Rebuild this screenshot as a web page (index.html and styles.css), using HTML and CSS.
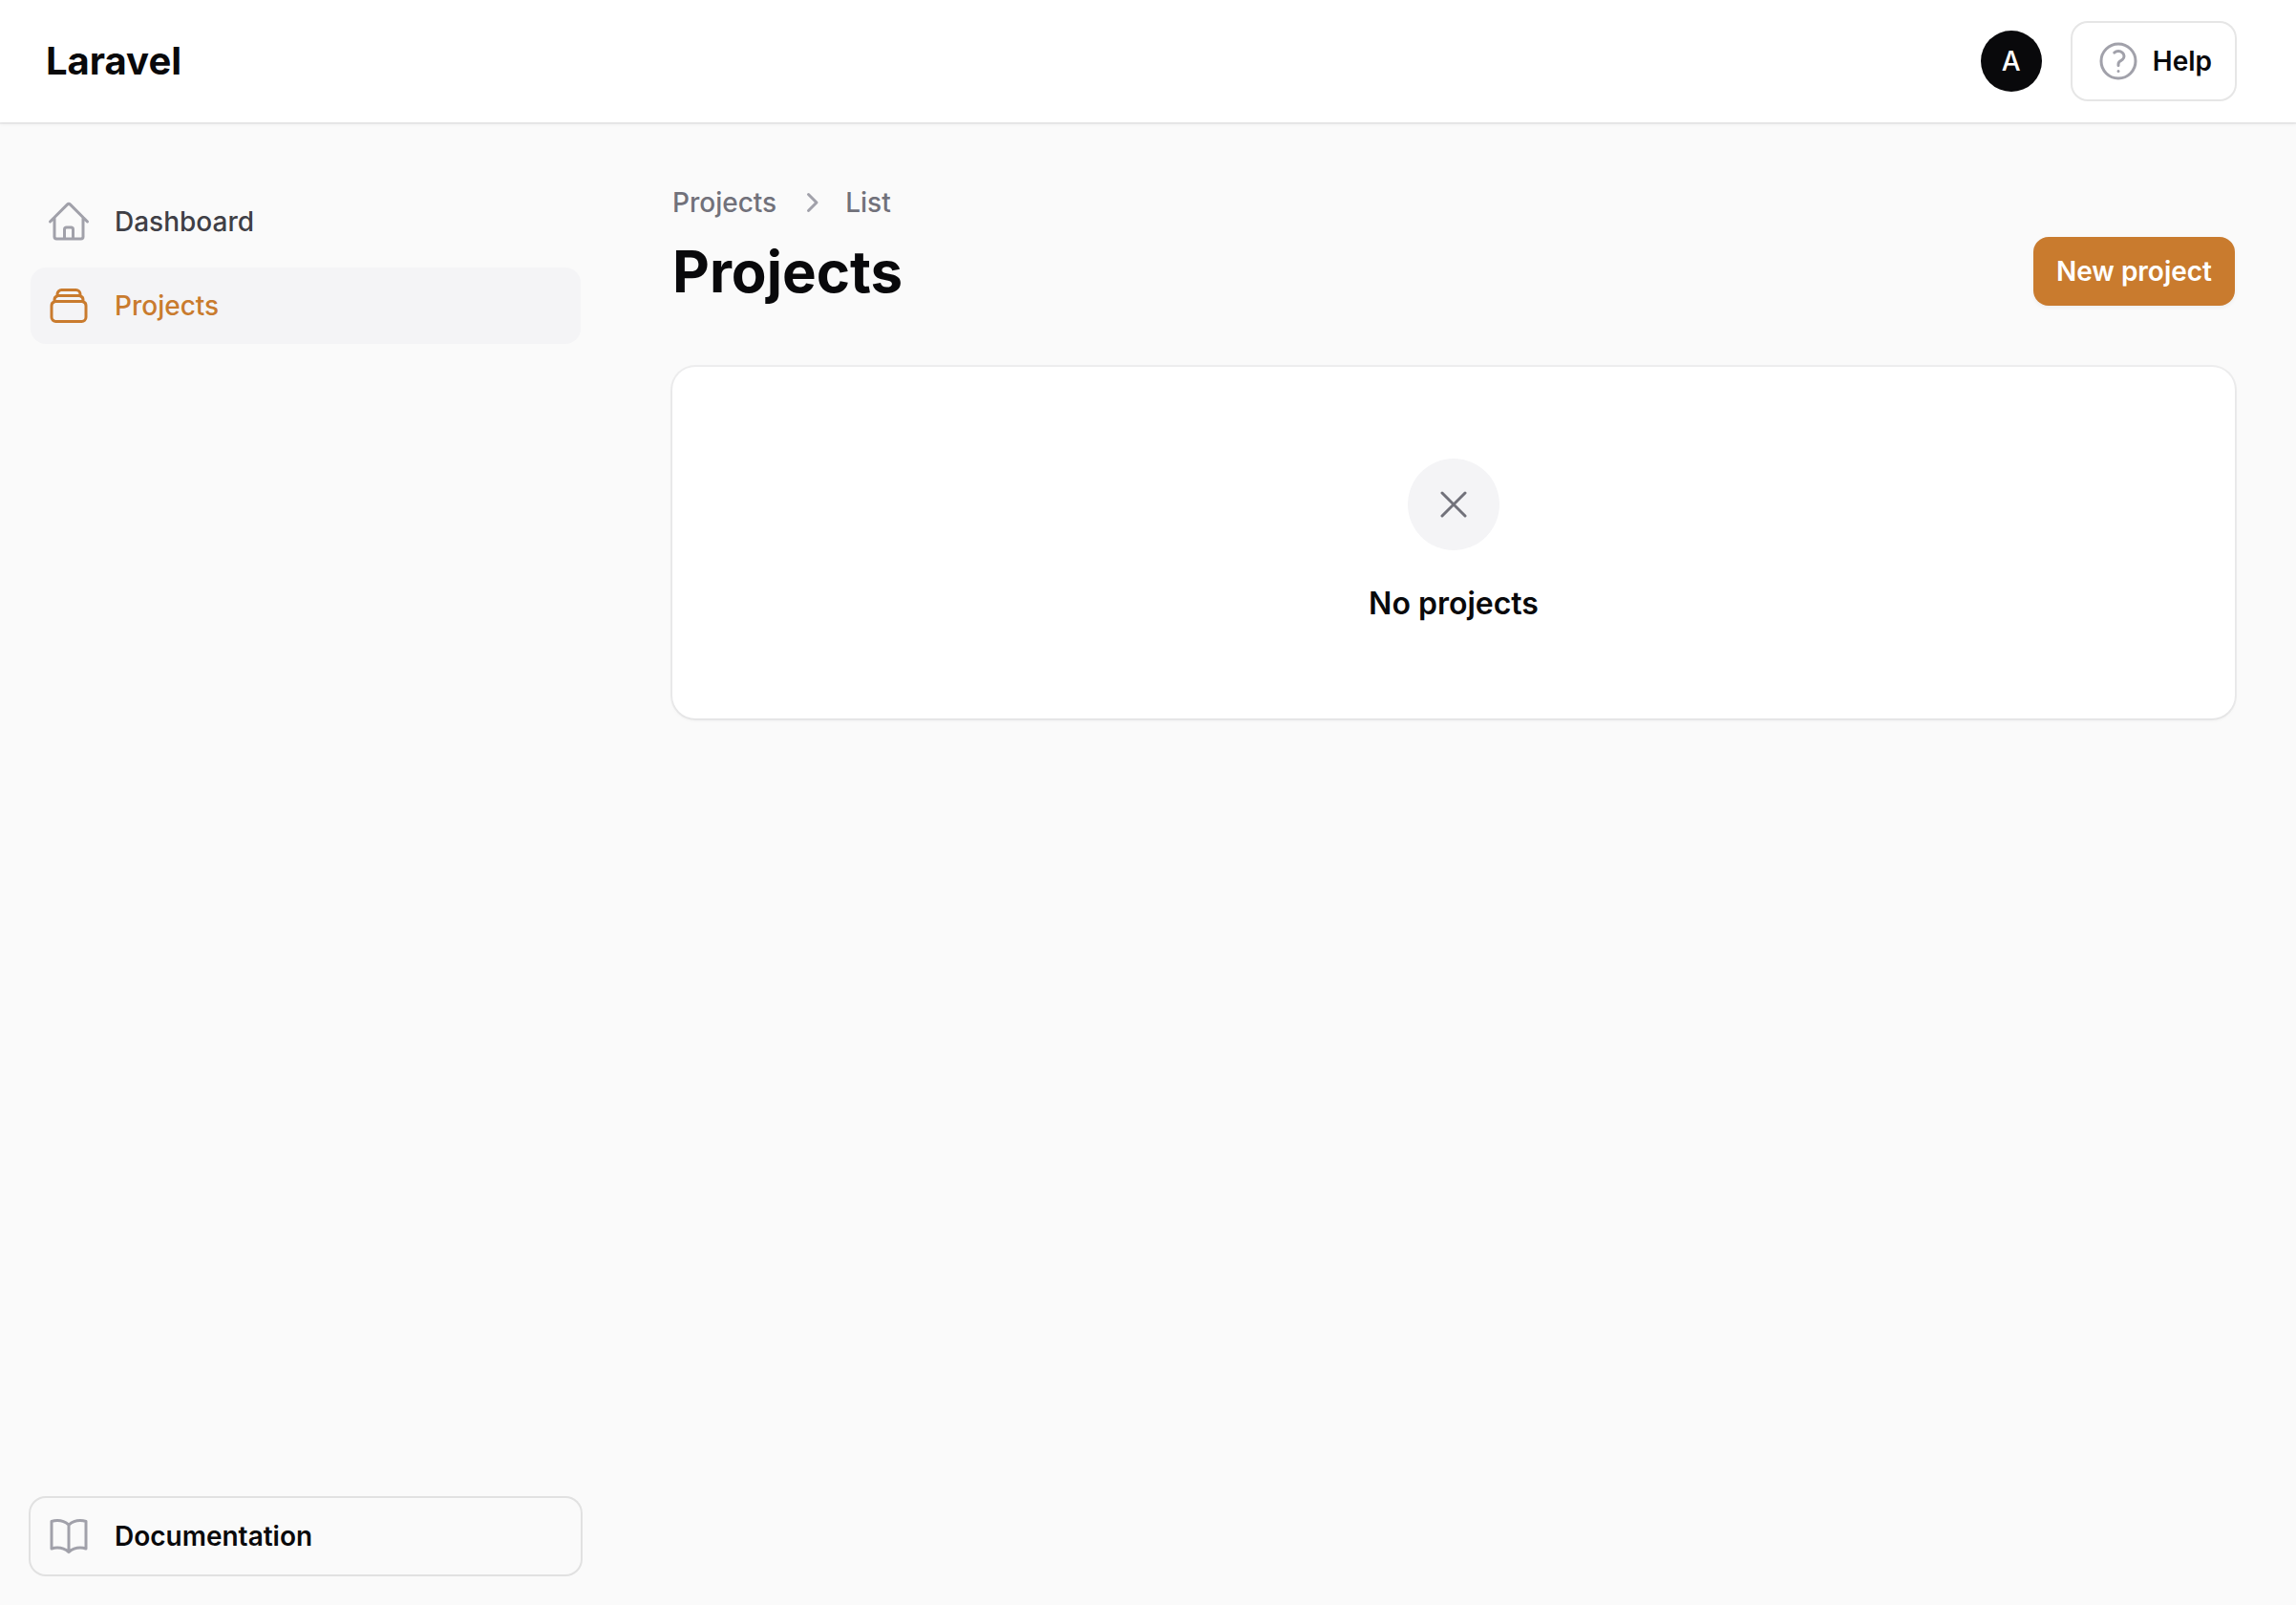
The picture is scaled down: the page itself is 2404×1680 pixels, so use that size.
FILE: index.html
```html
<!DOCTYPE html>
<html lang="en">
<head>
  <meta charset="UTF-8" />
  <meta name="viewport" content="width=device-width, initial-scale=1.0"/>
  <title>Projects - Laravel</title>
  <link rel="stylesheet" href="styles.css">
</head>
<body>
  <header class="topbar">
    <a href="#" class="brand">Laravel</a>
    <div class="topbar-end">
      <button type="button" class="avatar" aria-label="User menu">A</button>
      <a href="#" class="outline-btn help-btn">
        <svg class="icon" viewBox="0 0 24 24">
          <path d="M9.879 7.519c1.171-1.025 3.071-1.025 4.242 0 1.172 1.025 1.172 2.687 0 3.712-.203.179-.43.326-.67.442-.745.361-1.45.999-1.45 1.827v.75M21 12a9 9 0 1 1-18 0 9 9 0 0 1 18 0Zm-9 5.25h.008v.008H12v-.008Z" />
        </svg>
        <span>Help</span>
      </a>
    </div>
  </header>

  <div class="layout">
    <!-- Sidebar -->
    <aside class="sidebar">
      <nav class="nav">
        <a href="#" class="nav-item">
          <svg class="icon" viewBox="0 0 24 24">
            <path d="m2.25 12 8.954-8.955c.44-.439 1.152-.439 1.591 0L21.75 12M4.5 9.75v10.125c0 .621.504 1.125 1.125 1.125H9.75v-4.875c0-.621.504-1.125 1.125-1.125h2.25c.621 0 1.125.504 1.125 1.125V21h4.125c.621 0 1.125-.504 1.125-1.125V9.75M8.25 21h8.25" />
          </svg>
          <span>Dashboard</span>
        </a>
        <a href="#" class="nav-item active">
          <svg class="icon" viewBox="0 0 24 24">
            <path d="M6 6.878V6a2.25 2.25 0 0 1 2.25-2.25h7.5A2.25 2.25 0 0 1 18 6v.878m-12 0c.235-.083.487-.128.75-.128h10.5c.263 0 .515.045.75.128m-12 0A2.25 2.25 0 0 0 4.5 9v.878m13.5-3A2.25 2.25 0 0 1 19.5 9v.878m0 0a2.246 2.246 0 0 0-.75-.128H5.25c-.263 0-.515.045-.75.128m15 0A2.25 2.25 0 0 1 21 12v6a2.25 2.25 0 0 1-2.25 2.25H5.25A2.25 2.25 0 0 1 3 18v-6c0-.98.626-1.813 1.5-2.122" />
          </svg>
          <span>Projects</span>
        </a>
      </nav>
      <a href="#" class="outline-btn docs-btn">
        <svg class="icon" viewBox="0 0 24 24">
          <path d="M12 6.042A8.967 8.967 0 0 0 6 3.75c-1.052 0-2.062.18-3 .512v14.25A8.987 8.987 0 0 1 6 18c2.305 0 4.408.867 6 2.292m0-14.25a8.966 8.966 0 0 1 6-2.292c1.052 0 2.062.18 3 .512v14.25A8.987 8.987 0 0 0 18 18a8.967 8.967 0 0 0-6 2.292m0-14.25v14.25" />
        </svg>
        <span>Documentation</span>
      </a>
    </aside>

    <!-- Page content -->
    <main class="content">
      <nav class="breadcrumbs" aria-label="Breadcrumb">
        <a href="#">Projects</a>
        <svg class="chevron" viewBox="0 0 20 20">
          <path d="M8.22 5.22a.75.75 0 0 1 1.06 0l4.25 4.25a.75.75 0 0 1 0 1.06l-4.25 4.25a.75.75 0 0 1-1.06-1.06L11.94 10 8.22 6.28a.75.75 0 0 1 0-1.06Z" />
        </svg>
        <a href="#">List</a>
      </nav>
      <div class="page-header">
        <h1>Projects</h1>
        <button type="button" class="primary-btn">New project</button>
      </div>
      <section class="card">
        <div class="empty-icon">
          <svg class="icon" viewBox="0 0 24 24">
            <path d="M6 18 18 6M6 6l12 12" />
          </svg>
        </div>
        <h2>No projects</h2>
      </section>
    </main>
  </div>
</body>
</html>
```
FILE: styles.css
```css
* {
  box-sizing: border-box;
}

body {
  font-family: Inter, sans-serif;
  font-size: 28px;
  line-height: 40px;
  margin: 0;
  min-height: 100vh;
  display: flex;
  flex-direction: column;
  background-color: #fafafa;
  color: #09090b;
}

a {
  color: inherit;
  text-decoration: none;
}

button {
  font: inherit;
  border: none;
  cursor: pointer;
}

h1, h2 {
  margin: 0;
}

.icon {
  width: 48px;
  height: 48px;
  flex-shrink: 0;
  fill: none;
  stroke: #a1a1aa;
  stroke-width: 1.5;
  stroke-linecap: round;
  stroke-linejoin: round;
}

/* Top bar */
.topbar {
  display: flex;
  justify-content: space-between;
  align-items: center;
  height: 128px;
  padding: 0 64px 0 48px;
  background-color: white;
  box-shadow: 0 0 0 2px rgba(9, 9, 11, 0.05), 0 2px 4px rgba(0, 0, 0, 0.05);
}

.brand {
  font-size: 40px;
  font-weight: 700;
}

.topbar-end {
  display: flex;
  align-items: center;
  gap: 32px;
}

.avatar {
  width: 64px;
  height: 64px;
  padding: 0;
  border-radius: 50%;
  background-color: #09090b;
  color: white;
  font-weight: 500;
}

.outline-btn {
  display: flex;
  align-items: center;
  height: 80px;
  border-radius: 16px;
  box-shadow: 0 0 0 2px rgba(9, 9, 11, 0.1);
  font-weight: 600;
}

.help-btn {
  gap: 12px;
  padding: 0 24px;
}

/* Sidebar */
.layout {
  display: flex;
  flex: 1;
}

.sidebar {
  display: flex;
  flex-direction: column;
  justify-content: space-between;
  width: 640px;
  flex-shrink: 0;
  padding: 64px 32px 32px;
}

.nav {
  display: flex;
  flex-direction: column;
  gap: 8px;
}

.nav-item {
  display: flex;
  align-items: center;
  gap: 24px;
  height: 80px;
  padding: 0 16px;
  border-radius: 16px;
  color: #3f3f46;
  font-weight: 500;
}

.nav-item.active {
  background-color: #f4f4f6;
  color: #c97b2e;
}

.nav-item.active .icon {
  stroke: #c97b2e;
}

.docs-btn {
  gap: 24px;
  padding: 0 16px;
}

/* Content */
.content {
  flex: 1;
  padding: 64px;
}

.breadcrumbs {
  display: flex;
  align-items: center;
  gap: 16px;
  margin-bottom: 16px;
  color: #71717a;
  font-weight: 500;
}

.chevron {
  width: 40px;
  height: 40px;
  fill: #a1a1aa;
}

.page-header {
  display: flex;
  justify-content: space-between;
  align-items: center;
  margin-bottom: 64px;
}

h1 {
  font-size: 60px;
  line-height: 72px;
  font-weight: 700;
}

.primary-btn {
  height: 72px;
  padding: 0 24px;
  border-radius: 16px;
  background-color: #c97b2e;
  color: white;
  font-weight: 600;
  box-shadow: 0 2px 4px rgba(0, 0, 0, 0.05);
}

.card {
  display: flex;
  flex-direction: column;
  align-items: center;
  gap: 32px;
  padding: 96px 48px;
  border-radius: 24px;
  background-color: white;
  box-shadow: 0 0 0 2px rgba(9, 9, 11, 0.05), 0 2px 4px rgba(0, 0, 0, 0.05);
}

.empty-icon {
  display: flex;
  padding: 24px;
  border-radius: 50%;
  background-color: #f4f4f6;
}

.empty-icon .icon {
  stroke: #71717a;
}

h2 {
  font-size: 32px;
  line-height: 48px;
  font-weight: 600;
}
```
